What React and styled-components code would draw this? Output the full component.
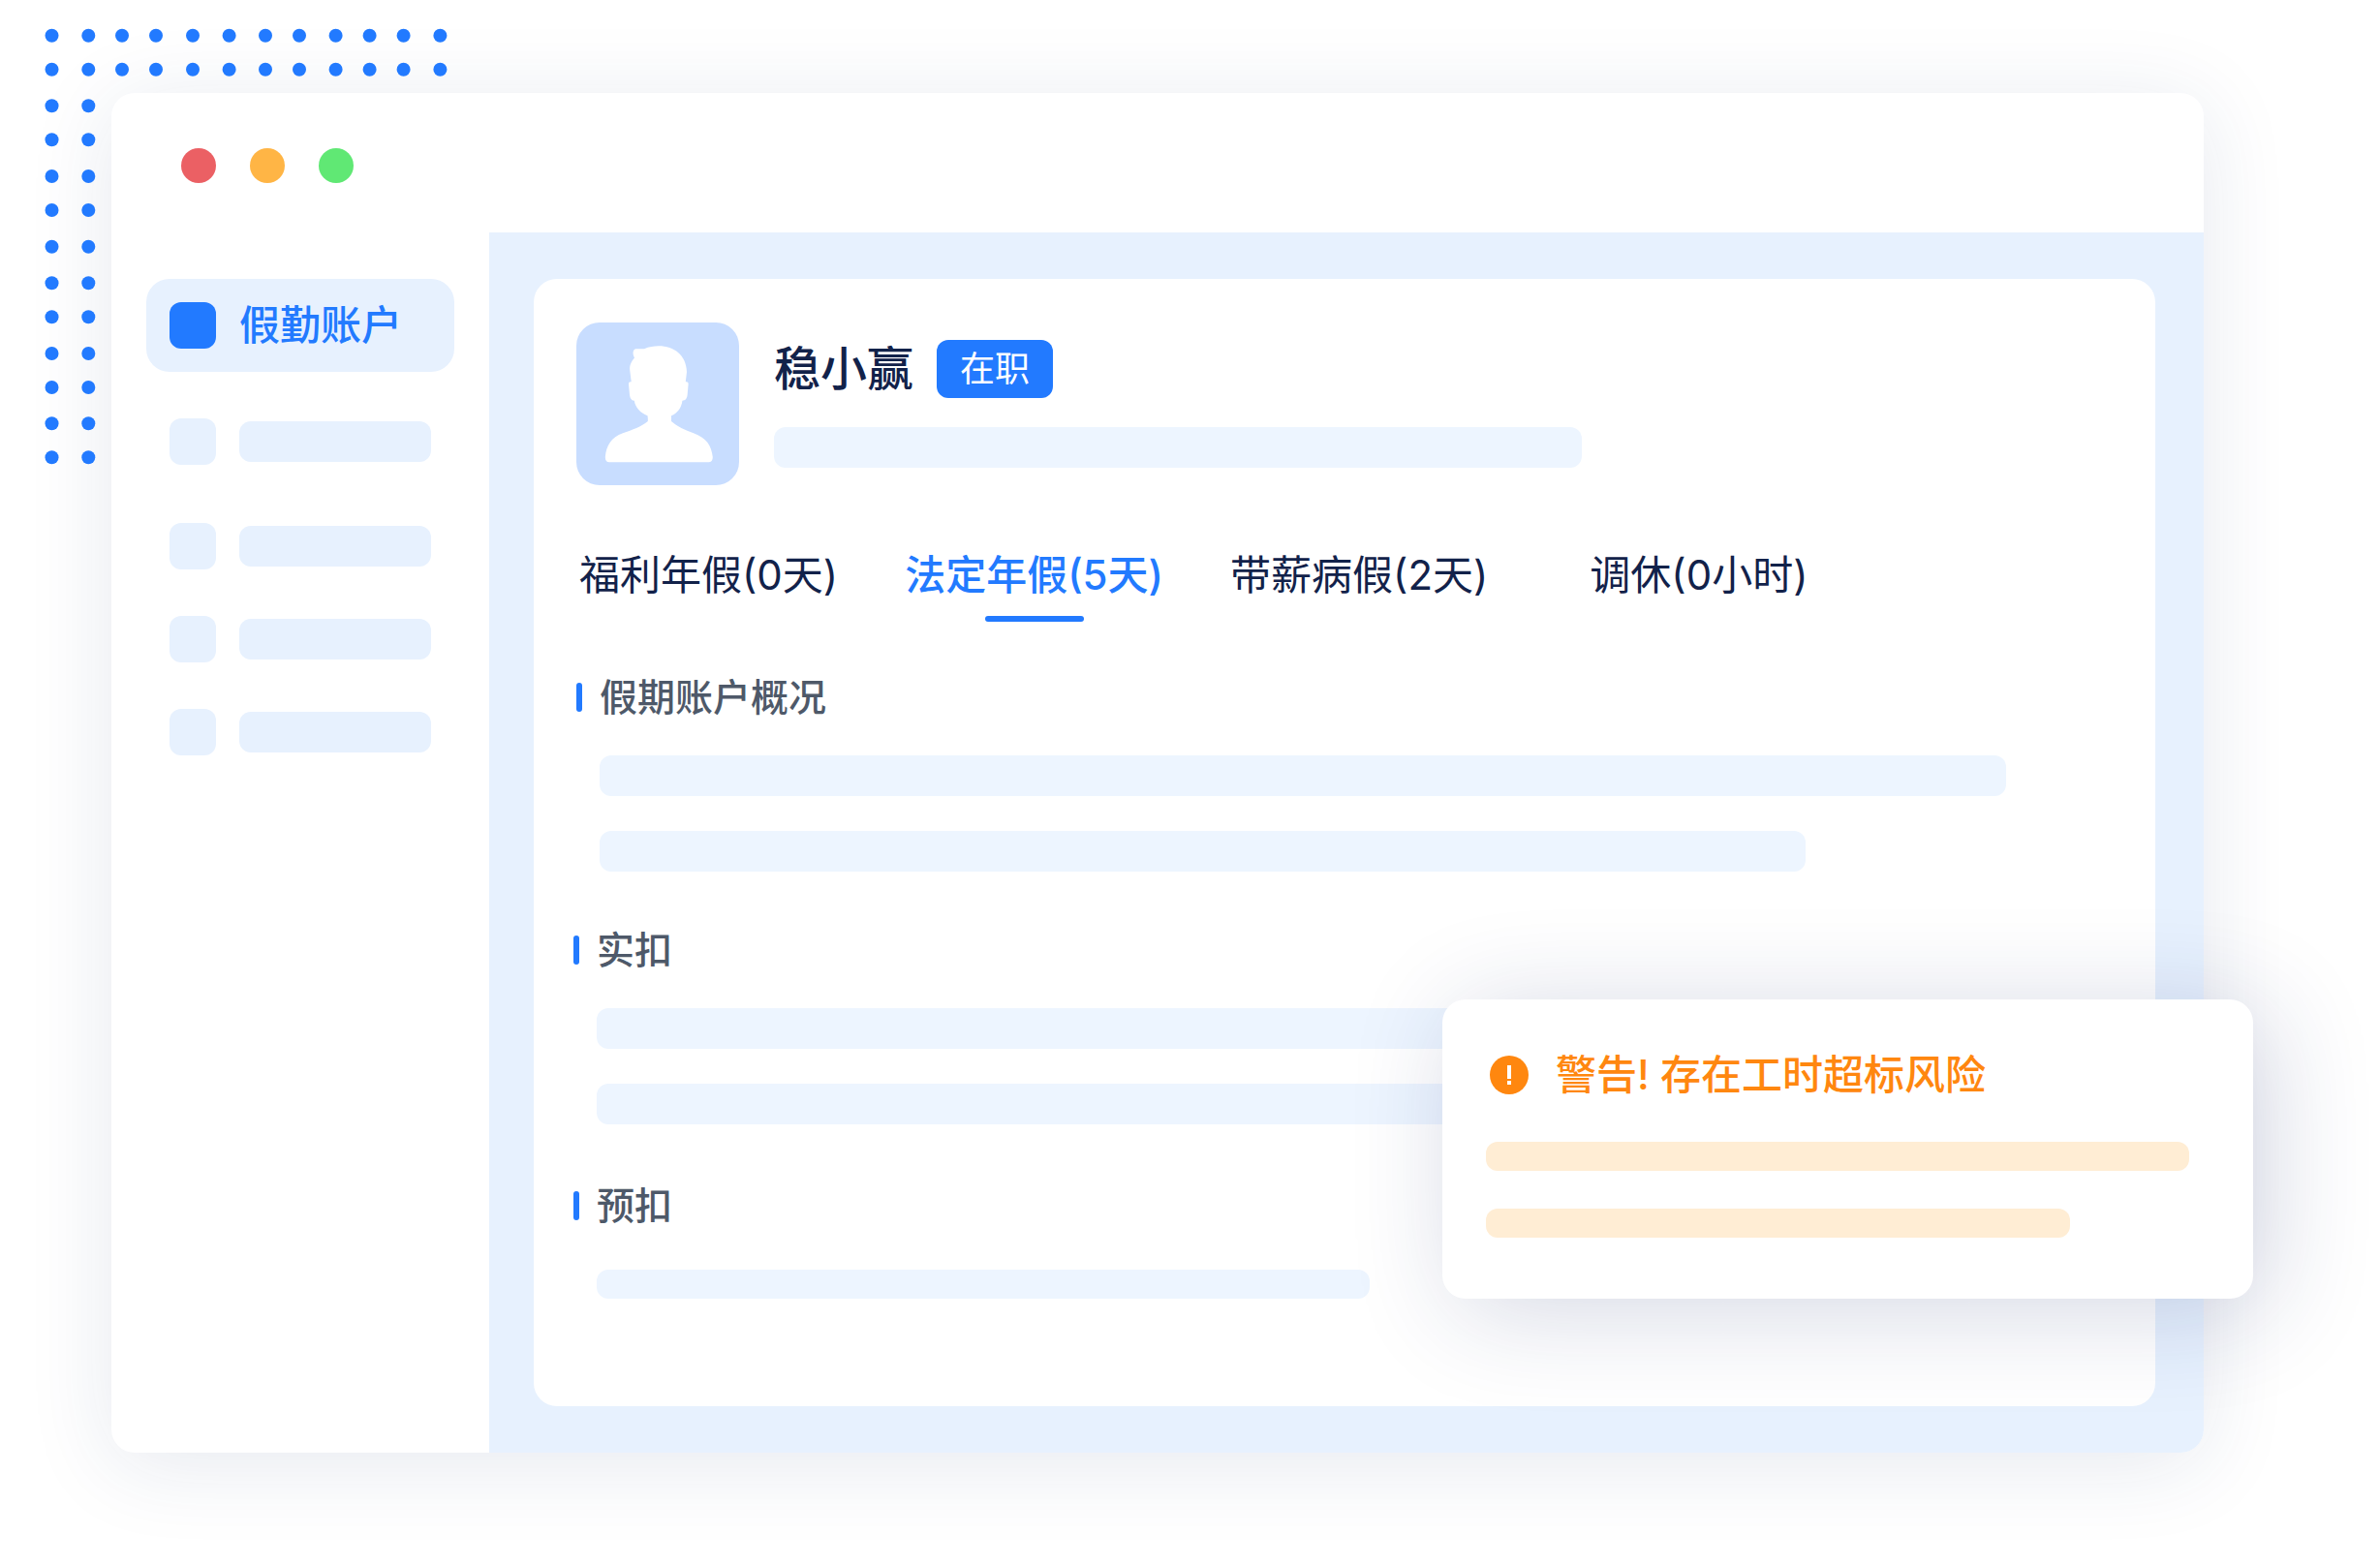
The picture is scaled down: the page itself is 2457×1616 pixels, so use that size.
import React from 'react'
import styled, { createGlobalStyle } from 'styled-components';

const COLOR = {
    main: '#227AFF',
    sub: '#E7F1FE',
    bar: '#EDF5FF',
    avatar: '#C8DDFF',
    title: '#12224A',
    gray: '#4E5969',
    warn: '#FF870F',
    warnBar: '#FFEDD4',
}

const GlobalStyle = createGlobalStyle`
    * {
        box-sizing: border-box;
    }
    body {
        margin: 0;
        background-color: #fff;
        font-family: Inter, "Noto Sans CJK SC", sans-serif;
    }
    button {
        border: none;
        background: none;
        padding: 0;
        font-family: inherit;
        cursor: pointer;
    }
    h1, h2, p {
        margin: 0;
    }
`
const Page = styled.div`
    position: relative;
    min-height: 100vh;
    padding: 96px 182px 116px 115px;
    overflow: hidden;
`
const DotPattern = styled.svg`
    position: absolute;
    top: 0;
    left: 0;
    fill: ${COLOR.main};
`
const Window = styled.div`
    position: relative;
    display: flex;
    flex-direction: column;
    min-height: calc(100vh - 212px);
    border-radius: 24px;
    background-color: #fff;
    box-shadow: 0 12px 90px rgba(29, 53, 107, 0.11);
`
const TitleBar = styled.header`
    display: flex;
    align-items: center;
    gap: 35px;
    height: 144px;
    padding: 6px 72px 0;
`
const Light = styled.span`
    width: 36px;
    height: 36px;
    border-radius: 50%;
    background-color: ${({ $color }) => $color};
`
const Body = styled.div`
    display: flex;
    flex: 1;
`
const Sidebar = styled.nav`
    flex: none;
    width: 390px;
    padding: 48px 36px;
`
const MenuButton = styled.button`
    display: flex;
    align-items: center;
    gap: 24px;
    width: 100%;
    height: 96px;
    padding: 0 24px;
    border-radius: 24px;
    background-color: ${COLOR.sub};
    color: ${COLOR.main};
    font-size: 42px;
    font-weight: 500;
    line-height: 60px;
`
const MenuIcon = styled.span`
    width: 48px;
    height: 48px;
    border-radius: 12px;
    background-color: ${({ $active }) => ($active ? COLOR.main : COLOR.sub)};
`
const MenuPlaceholder = styled.div`
    display: flex;
    align-items: center;
    gap: 24px;
    margin-top: 48px;
    padding: 0 24px;

    &:nth-child(3) {
        margin-top: 60px;
    }
`
const MenuBar = styled.span`
    flex: 1;
    height: 42px;
    border-radius: 12px;
    background-color: ${COLOR.sub};
`
const Main = styled.main`
    flex: 1;
    display: flex;
    padding: 48px 50px 48px 46px;
    border-bottom-right-radius: 24px;
    background-color: ${COLOR.sub};
`
const Card = styled.section`
    flex: 1;
    padding: 45px 44px;
    border-radius: 24px;
    background-color: #fff;
`
const Profile = styled.div`
    display: flex;
    gap: 36px;
`
const Avatar = styled.svg`
    flex: none;
    width: 168px;
    height: 168px;
    border-radius: 24px;
    background-color: ${COLOR.avatar};
    fill: #fff;
`
const ProfileInfo = styled.div`
    flex: 1;
    padding-top: 18px;
`
const NameRow = styled.div`
    display: flex;
    align-items: center;
    gap: 24px;
    margin-bottom: 30px;
`
const Name = styled.h1`
    color: ${COLOR.title};
    font-size: 48px;
    font-weight: 500;
    line-height: 60px;
`
const Badge = styled.span`
    padding: 0 24px;
    border-radius: 12px;
    background-color: ${COLOR.main};
    color: #fff;
    font-size: 36px;
    line-height: 60px;
`
const Bar = styled.div`
    width: ${({ $width }) => $width}px;
    max-width: 100%;
    height: ${({ $thin }) => ($thin ? 30 : 42)}px;
    border-radius: 12px;
    background-color: ${({ $warn }) => ($warn ? COLOR.warnBar : COLOR.bar)};
`
const TabList = styled.div`
    display: flex;
    gap: 69px;
    margin-top: 63px;
    padding-left: 3px;
`
const Tab = styled.button`
    display: flex;
    flex-direction: column;
    align-items: center;
    gap: 12px;
    color: ${({ $active }) => ($active ? COLOR.main : COLOR.title)};
    font-size: 42px;
    font-weight: ${({ $active }) => ($active ? 500 : 400)};
    line-height: 60px;

    &::after {
        content: '';
        width: 102px;
        height: 6px;
        border-radius: 3px;
        background-color: ${({ $active }) => ($active ? COLOR.main : 'transparent')};
    }
    &:last-child {
        margin-left: 36px;
    }
`
const Overview = styled.div`
    margin-top: 57px;
`
const Deductions = styled.div`
    display: flex;
    flex-direction: column;
    gap: 63px;
    margin: 60px 0 0 -3px;
`
const SectionTitle = styled.h2`
    display: flex;
    align-items: center;
    gap: 18px;
    color: ${COLOR.gray};
    font-size: 39px;
    font-weight: 500;
    line-height: 42px;

    &::before {
        content: '';
        width: 6px;
        height: 30px;
        border-radius: 3px;
        background-color: ${COLOR.main};
    }
`
const SectionBars = styled.div`
    display: flex;
    flex-direction: column;
    gap: 36px;
    margin-top: ${({ $loose }) => ($loose ? 45 : 39)}px;
    padding-left: 24px;
`
const Alert = styled.aside`
    position: absolute;
    right: -51px;
    bottom: 159px;
    width: 837px;
    padding: 54px 45px 63px;
    border-radius: 24px;
    background-color: #fff;
    box-shadow: 15px 12px 108px rgba(29, 45, 107, 0.19);
`
const AlertTitle = styled.p`
    display: flex;
    align-items: center;
    gap: 24px;
    color: ${COLOR.warn};
    font-size: 42px;
    font-weight: 500;
    line-height: 48px;
`
const AlertBars = styled.div`
    display: flex;
    flex-direction: column;
    gap: 39px;
    margin-top: 45px;
`

const DOT_X = [53.5, 91.3, 126, 161, 199, 236.6, 274, 309, 346.6, 381.6, 416.6, 454.4];
const DOT_Y = [36.7, 71.7, 109.3, 144.3, 182, 217, 254.7, 292.3, 327.3, 365, 400, 437.3, 472.3];
const LIGHTS = ['#EB6064', '#FFB545', '#60E874'];
const TABS = ['福利年假(0天)', '法定年假(5天)', '带薪病假(2天)', '调休(0小时)'];
const ACTIVE_TAB = 1;

function Dots () {
    return(
        <DotPattern width="480" height="500" aria-hidden="true">
            {DOT_Y.map((y, row) =>
                DOT_X.filter((_, col) => row < 2 || col < 2).map((x) => (
                    <circle key={`${x}-${y}`} cx={x} cy={y} r="7" />
                ))
            )}
        </DotPattern>
    )
}

function Section ({title, bars, thin}) {
    return(
        <div>
            <SectionTitle>{title}</SectionTitle>
            <SectionBars $loose={thin}>
                {bars.map((width, i) => <Bar key={i} $width={width} $thin={thin} />)}
            </SectionBars>
        </div>
    )
}

function App () {
    return(
        <Page>
            <GlobalStyle />
            <Window>
                <TitleBar>
                    {LIGHTS.map((color) => <Light key={color} $color={color} />)}
                </TitleBar>
                <Body>
                    <Sidebar>
                        <MenuButton type="button">
                            <MenuIcon $active />
                            假勤账户
                        </MenuButton>
                        {[1, 2, 3, 4].map((item) => (
                            <MenuPlaceholder key={item}>
                                <MenuIcon />
                                <MenuBar />
                            </MenuPlaceholder>
                        ))}
                    </Sidebar>
                    <Main>
                        <Card>
                            <Profile>
                                <Avatar viewBox="0 0 168 168" aria-hidden="true">
                                    <path d="M60 36.500C57.500 32 58.500 27.500 61.500 27.300L70 27.200C75 25 80 24.300 85 24.300C101 24.300 113.500 34 114 51L112.800 61.300C115 61 115.800 62 115.600 64L114.600 75C114 79 112.500 80.700 109.400 80.700C108.500 88 104.500 93.500 98 96.300V102C104 107.500 112 111 121 114.300C134 119 139.500 127 140.800 139C140.900 142.500 139 144.300 136.500 144.300H34C31.500 144.300 29.700 142.500 29.800 139C31 127 36 118.500 48 114.300C58 110.800 67 107.500 73.800 102C74 100 73.700 98 73.500 96.300C66 93 61 88 59.800 80.700C56.500 80.500 55.500 78 55 74.500L54 64C53.900 62 54.500 61 56.700 61.300L55.200 49C55 43.500 56.500 41 60 36.500Z" />
                                </Avatar>
                                <ProfileInfo>
                                    <NameRow>
                                        <Name>稳小赢</Name>
                                        <Badge>在职</Badge>
                                    </NameRow>
                                    <Bar $width={834} />
                                </ProfileInfo>
                            </Profile>
                            <TabList role="tablist">
                                {TABS.map((tab, i) => (
                                    <Tab
                                        key={tab}
                                        type="button"
                                        role="tab"
                                        aria-selected={i === ACTIVE_TAB}
                                        $active={i === ACTIVE_TAB}
                                    >
                                        {tab}
                                    </Tab>
                                ))}
                            </TabList>
                            <Overview>
                                <Section title="假期账户概况" bars={[1452, 1245]} />
                            </Overview>
                            <Deductions>
                                <Section title="实扣" bars={[1452, 1245]} />
                                <Section title="预扣" bars={[798]} thin />
                            </Deductions>
                        </Card>
                    </Main>
                </Body>
                <Alert role="alert">
                    <AlertTitle>
                        <svg width="48" height="48" viewBox="0 0 48 48" aria-hidden="true">
                            <circle cx="24" cy="24" r="20" fill={COLOR.warn} />
                            <path d="M22 14h4v14h-4zM22 30h4v4h-4z" fill="#fff" />
                        </svg>
                        警告! 存在工时超标风险
                    </AlertTitle>
                    <AlertBars>
                        <Bar $width={726} $thin $warn />
                        <Bar $width={603} $thin $warn />
                    </AlertBars>
                </Alert>
            </Window>
            <Dots />
        </Page>
    )
}

export default App
